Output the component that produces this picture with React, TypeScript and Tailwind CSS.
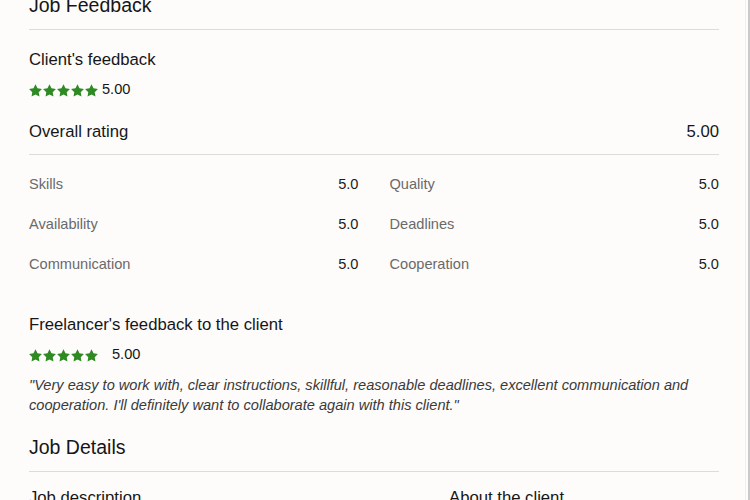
import React from 'react';

const Star = () => (
  <svg viewBox="0 0 24 24" className="w-[13px] h-[13px]" fill="#2f8a24">
    <path d="M12 .6l3.67 7.43 8.2 1.19-5.94 5.79 1.4 8.17L12 19.33l-7.33 3.85 1.4-8.17L.13 9.22l8.2-1.19z" />
  </svg>
);

const Stars = () => (
  <div className="flex gap-[1px]">
    {[0, 1, 2, 3, 4].map((i) => (
      <Star key={i} />
    ))}
  </div>
);

const Row = ({ label, value }: { label: string; value: string }) => (
  <div className="flex justify-between items-center h-5">
    <span className="text-[#6a6a6a]">{label}</span>
    <span className="text-[#1c1c1c]">{value}</span>
  </div>
);

export default function App() {
  const left = [
    ['Skills', '5.0'],
    ['Availability', '5.0'],
    ['Communication', '5.0'],
  ];
  const right = [
    ['Quality', '5.0'],
    ['Deadlines', '5.0'],
    ['Cooperation', '5.0'],
  ];

  return (
    <div
      className="w-[750px] h-[500px] overflow-hidden flex bg-[#fdfcfb] text-[#161616]"
      style={{ fontFamily: '"Liberation Sans", Arial, sans-serif' }}
    >
      <div className="flex-1 pl-[29px] pr-[26px]">
        <div className="-mt-[7px] pb-[12px] border-b border-[#dcdcdc] text-[19.5px] leading-6">Job Feedback</div>

        <div className="mt-[18px] text-[16.7px] leading-6">Client's feedback</div>
        <div className="mt-[8px] flex items-center gap-[4px] h-5 text-[14.6px]">
          <Stars />
          <span>5.00</span>
        </div>

        <div className="mt-[20px] pb-[10px] border-b border-[#dcdcdc] flex justify-between text-[16.7px] leading-6">
          <span>Overall rating</span>
          <span>5.00</span>
        </div>

        <div className="mt-[19px] grid grid-cols-2 gap-x-[31px] text-[14.6px] leading-5">
          <div className="flex flex-col gap-5">
            {left.map(([l, v]) => (
              <Row key={l} label={l} value={v} />
            ))}
          </div>
          <div className="flex flex-col gap-5">
            {right.map(([l, v]) => (
              <Row key={l} label={l} value={v} />
            ))}
          </div>
        </div>

        <div className="mt-[39px] text-[16.7px] leading-6">Freelancer's feedback to the client</div>
        <div className="mt-[8px] flex items-center gap-[14px] h-5 text-[14.6px]">
          <Stars />
          <span>5.00</span>
        </div>
        <p className="mt-[10px] text-[14.6px] leading-5 italic text-[#3a3a3a]">
          "Very easy to work with, clear instructions, skillful, reasonable deadlines, excellent communication and
          cooperation. I'll definitely want to collaborate again with this client."
        </p>

        <div className="mt-[20px] pb-[12px] border-b border-[#dcdcdc] text-[19.5px] leading-6">Job Details</div>
        <div className="mt-[14px] grid grid-cols-[420px_1fr] text-[16.7px] leading-6">
          <span>Job description</span>
          <span>About the client</span>
        </div>
      </div>
      <div className="w-px bg-[#f0efed]" />
      <div className="w-[2px]" />
      <div className="w-[2px] bg-[#c9c9c9]" />
    </div>
  );
}
